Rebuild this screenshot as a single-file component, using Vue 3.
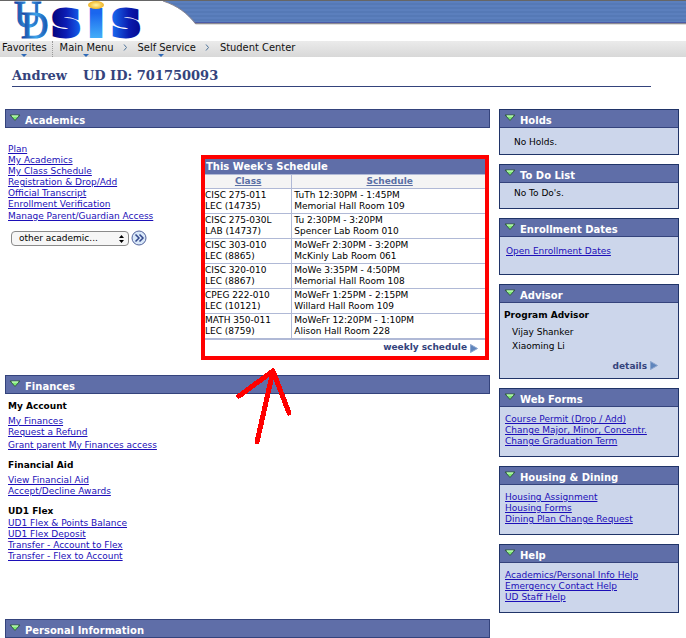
<script setup>
const crumbs = [
  { label: 'Favorites', menu: true, cls: 'fav' },
  { label: 'Main Menu', menu: true, cls: 'main' },
  { label: 'Self Service', menu: true, cls: 'self' },
  { label: 'Student Center', menu: false, cls: 'center' },
]

const academics = [
  'Plan',
  'My Academics',
  'My Class Schedule',
  'Registration & Drop/Add',
  'Official Transcript',
  'Enrollment Verification',
  'Manage Parent/Guardian Access',
]

const schedule = [
  ['CISC 275-011', 'LEC (14735)', 'TuTh 12:30PM - 1:45PM', 'Memorial Hall Room 109'],
  ['CISC 275-030L', 'LAB (14737)', 'Tu 2:30PM - 3:20PM', 'Spencer Lab Room 010'],
  ['CISC 303-010', 'LEC (8865)', 'MoWeFr 2:30PM - 3:20PM', 'McKinly Lab Room 061'],
  ['CISC 320-010', 'LEC (8867)', 'MoWe 3:35PM - 4:50PM', 'Memorial Hall Room 108'],
  ['CPEG 222-010', 'LEC (10121)', 'MoWeFr 1:25PM - 2:15PM', 'Willard Hall Room 109'],
  ['MATH 350-011', 'LEC (8759)', 'MoWeFr 12:20PM - 1:10PM', 'Alison Hall Room 228'],
]

const finances = [
  { title: 'My Account', cls: 'account', links: ['My Finances', 'Request a Refund', 'Grant parent My Finances access'] },
  { title: 'Financial Aid', cls: 'aid', links: ['View Financial Aid', 'Accept/Decline Awards'] },
  {
    title: 'UD1 Flex',
    cls: 'flex',
    links: ['UD1 Flex & Points Balance', 'UD1 Flex Deposit', 'Transfer - Account to Flex', 'Transfer - Flex to Account'],
  },
]

const side = [
  { title: 'Holds', cls: 'holds', note: 'No Holds.' },
  { title: 'To Do List', cls: 'todo', note: "No To Do's." },
  { title: 'Enrollment Dates', cls: 'dates', links: ['Open Enrollment Dates'] },
  { title: 'Advisor', cls: 'advisor', heading: 'Program Advisor', people: ['Vijay Shanker', 'Xiaoming Li'] },
  { title: 'Web Forms', cls: 'forms', links: ['Course Permit (Drop / Add)', 'Change Major, Minor, Concentr.', 'Change Graduation Term'] },
  { title: 'Housing & Dining', cls: 'housing', links: ['Housing Assignment', 'Housing Forms', 'Dining Plan Change Request'] },
  { title: 'Help', cls: 'help', links: ['Academics/Personal Info Help', 'Emergency Contact Help', 'UD Staff Help'] },
]
</script>

<template>
  <div class="page">
    <header class="banner">
      <svg class="logo" width="160" height="41" viewBox="0 0 160 41" role="img" aria-label="UDSIS">
        <defs>
          <linearGradient id="ud" x1="0" y1="0" x2="1" y2="0">
            <stop offset="0" stop-color="#123a9c" />
            <stop offset=".55" stop-color="#3aa3ea" />
            <stop offset="1" stop-color="#164aa8" />
          </linearGradient>
          <linearGradient id="sa" x1="0" y1="0" x2="1" y2="0">
            <stop offset="0" stop-color="#04047c" />
            <stop offset=".5" stop-color="#0c1cb4" />
            <stop offset="1" stop-color="#1460ec" />
          </linearGradient>
          <linearGradient id="si" x1="0" y1="0" x2="0" y2="1">
            <stop offset=".4" stop-color="#1a66ee" />
            <stop offset="1" stop-color="#52c8fc" />
          </linearGradient>
          <linearGradient id="sb" x1="0" y1="0" x2="1" y2="0">
            <stop offset="0" stop-color="#1a6cf0" />
            <stop offset=".6" stop-color="#0a1cb0" />
            <stop offset="1" stop-color="#060a90" />
          </linearGradient>
          <radialGradient id="dot">
            <stop offset="0" stop-color="#fff6a8" />
            <stop offset="1" stop-color="#f0b424" />
          </radialGradient>
        </defs>
        <text class="serif" x="14" y="27" fill="url(#ud)" stroke="url(#ud)">U</text>
        <text class="serif" x="21" y="38" fill="url(#ud)" stroke="url(#ud)">D</text>
        <text class="sans" x="66" y="36" fill="url(#sa)" stroke="url(#sa)">s</text>
        <text class="sans" x="96" y="36" fill="url(#si)" stroke="url(#si)">ı</text>
        <text class="sans" x="126" y="36" fill="url(#sb)" stroke="url(#sb)">s</text>
        <ellipse cx="96" cy="5" rx="8" ry="4" fill="url(#dot)" />
      </svg>
      <div class="band">
        <svg width="37" height="24" viewBox="0 0 37 24" aria-hidden="true">
          <path d="M0 0H3C18 5 27 12 36 24H0Z" fill="#fff" />
          <path d="M3 0C18 5 27 12 36 23" fill="none" stroke="#8d8790" />
        </svg>
      </div>
    </header>

    <nav class="crumbs" aria-label="Breadcrumb">
      <a v-for="c in crumbs" :key="c.label" href="#" :class="c.cls">
        <span>{{ c.label }}</span>
        <svg v-if="c.menu" class="caret" width="6" height="3" viewBox="0 0 6 3" aria-hidden="true">
          <path d="M0 0H6L3 3Z" fill="#2f6ab8" />
        </svg>
        <svg v-if="c.cls === 'main' || c.cls === 'self'" class="sep" width="5" height="7" viewBox="0 0 5 7" aria-hidden="true">
          <path d="M1 .5L3.500 3.500L1 6.500" fill="none" stroke="#4d7299" />
        </svg>
      </a>
    </nav>

    <h1 class="student"><span>Andrew</span><span>UD ID: 701750093</span></h1>

    <div class="columns">
      <main>
        <section>
          <h2 class="bar">
            <svg width="12" height="8" viewBox="0 0 12 8" aria-hidden="true"><path d="M1 1H11L6 6.500Z" fill="#7bea72" stroke="#355648" /><path d="M3 2H9" stroke="#d9ffd2" /></svg>
            Academics
          </h2>
          <div class="academics">
            <div class="quick">
              <ul class="links">
                <li v-for="l in academics" :key="l"><a href="#">{{ l }}</a></li>
              </ul>
              <form class="picker" @submit.prevent>
                <div class="selectwrap">
                  <select aria-label="other academic">
                    <option>other academic...</option>
                  </select>
                  <svg class="updown" width="5" height="8" viewBox="0 0 5 8" aria-hidden="true"><path d="M0 3L2.500 0L5 3ZM0 5H5L2.500 8Z" /></svg>
                </div>
                <button type="submit" aria-label="Go">
                  <svg width="16" height="16" viewBox="0 0 16 16" aria-hidden="true">
                    <circle cx="8" cy="8" r="7" fill="#d8e7f8" stroke="#53639c" />
                    <path d="M4.500 4.500L8 8L4.500 11.500M8.500 4.500L12 8L8.500 11.500" fill="none" stroke="#34488c" stroke-width="1.500" />
                  </svg>
                </button>
              </form>
            </div>

            <div class="week">
              <table>
                <caption>This Week's Schedule</caption>
                <thead>
                  <tr>
                    <th scope="col"><a href="#">Class</a></th>
                    <th scope="col"><a href="#">Schedule</a></th>
                  </tr>
                </thead>
                <tbody>
                  <tr v-for="r in schedule" :key="r[0]">
                    <td>{{ r[0] }}<br />{{ r[1] }}</td>
                    <td>{{ r[2] }}<br />{{ r[3] }}</td>
                  </tr>
                </tbody>
              </table>
              <a href="#" class="more">weekly schedule
                <svg width="8" height="9" viewBox="0 0 8 9" aria-hidden="true"><path d="M.5 .5L7.500 4.500L.5 8.500Z" fill="#5f85bc" stroke="#8ba5cd" /></svg>
              </a>
              <svg class="arrow" width="60" height="80" viewBox="0 0 60 80" aria-hidden="true">
                <path d="M38 5L22 76M4 30L38 5L54 47" fill="none" stroke="#f00" stroke-width="5" stroke-linecap="round" stroke-linejoin="round" shape-rendering="crispEdges" />
              </svg>
            </div>
          </div>
        </section>

        <section>
          <h2 class="bar">
            <svg width="12" height="8" viewBox="0 0 12 8" aria-hidden="true"><path d="M1 1H11L6 6.500Z" fill="#7bea72" stroke="#355648" /><path d="M3 2H9" stroke="#d9ffd2" /></svg>
            Finances
          </h2>
          <div class="finances">
            <div v-for="g in finances" :key="g.title" :class="['group', g.cls]">
              <h3>{{ g.title }}</h3>
              <ul class="links">
                <li v-for="l in g.links" :key="l"><a href="#">{{ l }}</a></li>
              </ul>
            </div>
          </div>
        </section>

        <section>
          <h2 class="bar">
            <svg width="12" height="8" viewBox="0 0 12 8" aria-hidden="true"><path d="M1 1H11L6 6.500Z" fill="#7bea72" stroke="#355648" /><path d="M3 2H9" stroke="#d9ffd2" /></svg>
            Personal Information
          </h2>
        </section>
      </main>

      <aside>
        <section v-for="s in side" :key="s.title" :class="['card', s.cls]">
          <h2 class="bar">
            <svg width="12" height="8" viewBox="0 0 12 8" aria-hidden="true"><path d="M1 1H11L6 6.500Z" fill="#7bea72" stroke="#355648" /><path d="M3 2H9" stroke="#d9ffd2" /></svg>
            {{ s.title }}
          </h2>
          <div class="body">
            <p v-if="s.note">{{ s.note }}</p>
            <ul v-if="s.links" class="links">
              <li v-for="l in s.links" :key="l"><a href="#">{{ l }}</a></li>
            </ul>
            <template v-if="s.people">
              <h3>{{ s.heading }}</h3>
              <ul class="people">
                <li v-for="p in s.people" :key="p">{{ p }}</li>
              </ul>
              <a href="#" class="more">details
                <svg width="8" height="9" viewBox="0 0 8 9" aria-hidden="true"><path d="M.5 .5L7.500 4.500L.5 8.500Z" fill="#5f85bc" stroke="#8ba5cd" /></svg>
              </a>
            </template>
          </div>
        </section>
      </aside>
    </div>
  </div>
</template>

<style>
body {
  background: #fff;
}
</style>

<style scoped>
.page {
  font: 9px/11px "DejaVu Sans", Verdana, sans-serif;
  color: #000;
}
.page *,
.page {
  box-sizing: border-box;
}
h1, h2, h3, p, ul {
  margin: 0;
  padding: 0;
}
ul {
  list-style: none;
}
svg {
  display: block;
  flex: none;
}
.banner {
  display: flex;
  height: 41px;
  border-top: 1px solid #666;
}
.logo {
  margin-top: -1px;
}
.serif {
  font-family: "Liberation Serif", serif;
  font-size: 38px;
  stroke-width: 1px;
}
.sans {
  font-family: "DejaVu Sans", sans-serif;
  font-weight: bold;
  font-size: 48px;
  text-anchor: middle;
  stroke-width: 4px;
}
.band {
  flex: 1;
  height: 24px;
  background: repeating-linear-gradient(#5b7fbd 0 2px, #5579b6 2px 4px);
  box-shadow: inset 0 -1px #ddd, inset 0 -2px #8c8a92, inset 0 -3px #4c5ba8;
}
.crumbs {
  display: flex;
  height: 16px;
  background: linear-gradient(#ebebeb, #d8d8d8);
  font: 11px/13px "DejaVu Sans Condensed", Tahoma, sans-serif;
}
.crumbs a {
  position: relative;
  display: flex;
  color: #111;
  text-decoration: none;
  white-space: nowrap;
}
.crumbs .fav {
  padding: 0 5px 0 2px;
  border-right: 1px dotted #999;
}
.crumbs .main {
  padding-left: 7px;
}
.crumbs .self,
.crumbs .center {
  padding-left: 10px;
}
.caret {
  position: absolute;
  left: 21px;
  bottom: 0;
}
.main .caret,
.self .caret {
  left: 30px;
}
.sep {
  margin: 3px 0 0 9px;
}
.student {
  display: flex;
  gap: 16px;
  margin: 11px 35px 22px 12px;
  padding-bottom: 3px;
  border-bottom: 1px solid #34437c;
  color: #34437c;
  font: bold 13px/15px "DejaVu Serif", Georgia, serif;
}
.columns {
  display: flex;
  gap: 9px;
  padding: 0 7px 0 5px;
}
main {
  flex: 485;
  min-width: 0;
}
aside {
  flex: 180;
  min-width: 0;
  display: flex;
  flex-direction: column;
  gap: 9px;
}
.bar {
  display: flex;
  gap: 4px;
  height: 19px;
  padding: 4px 3px 0;
  border: 1px solid #34437c;
  background: #5f6ea8;
  color: #fff;
  font: bold 10px/13px "DejaVu Sans", Verdana, sans-serif;
}
.links a {
  color: #1c0fb8;
}
.academics {
  display: grid;
  grid-template-columns: 196fr 288fr;
  padding: 0 1px 15px 0;
}
.quick {
  padding: 16px 0 0 3px;
  white-space: nowrap;
}
.quick li:last-child {
  margin-top: 1px;
}
.picker {
  display: flex;
  align-items: center;
  gap: 2px;
  margin: 8px 0 0 3px;
}
.selectwrap {
  position: relative;
}
select {
  display: block;
  width: 118px;
  height: 15px;
  padding: 0 7px;
  border: 1px solid #8a8a8a;
  border-radius: 4px;
  background: #f6f6f6;
  color: #000;
  font: inherit;
  appearance: none;
}
.updown {
  position: absolute;
  right: 5px;
  top: 4px;
}
button {
  padding: 0;
  border: 0;
  background: none;
}
.week {
  position: relative;
  margin-top: 27px;
  border: 4px solid #f00;
}
table {
  width: 100%;
  border-collapse: collapse;
  table-layout: fixed;
  border-bottom: 2px solid #b0b9d6;
}
caption {
  height: 16px;
  padding-left: 1px;
  border-bottom: 1px solid #b0b9d6;
  background: #5f6ea8;
  color: #fff;
  font: bold 10px/15px "DejaVu Sans", Verdana, sans-serif;
  text-align: left;
}
th {
  height: 13px;
  padding: 0;
  background: #f4f4f4;
  line-height: 12px;
}
th:first-child {
  width: 31%;
}
th a {
  color: #5a6fa5;
}
td {
  height: 25px;
  padding: 1px 0;
  border-top: 1px solid #b0b9d6;
}
th + th,
td + td {
  padding-left: 2px;
  border-left: 1px solid #b0b9d6;
}
.more {
  display: flex;
  justify-content: flex-end;
  gap: 3px;
  color: #34437c;
  font-weight: bold;
  text-decoration: none;
}
.more svg {
  margin-top: 2px;
}
.week .more {
  padding: 2px 7px 3px;
}
.arrow {
  position: absolute;
  left: 30px;
  top: 207px;
}
.finances {
  min-height: 225px;
  padding: 6px 3px 0;
}
h3 {
  font: bold 9px/12px "DejaVu Sans", Verdana, sans-serif;
}
.group {
  margin-bottom: 8px;
}
.account .links,
.aid .links {
  padding-top: 4px;
}
.account li:last-child {
  padding-top: 2px;
}
.flex .links {
  padding-top: 1px;
}
.card {
  border: 1px solid #203468;
  background: #ccd6eb;
  white-space: nowrap;
}
.card .bar {
  height: 18px;
  padding: 4px 4px 0;
  border-width: 0 0 1px;
}
.body {
  padding: 7px 5px 9px;
}
.holds .body {
  padding: 9px 14px 6px;
}
.todo .body {
  padding: 5px 14px 9px;
}
.dates .body {
  padding: 9px 6px 17px;
}
.advisor .body {
  padding: 6px 4px 6px;
}
.people {
  padding: 4px 8px 7px;
  line-height: 14px;
}
.advisor .more {
  padding: 1px 16px 0 0;
}
.advisor .more svg {
  margin-top: 0;
}
</style>
